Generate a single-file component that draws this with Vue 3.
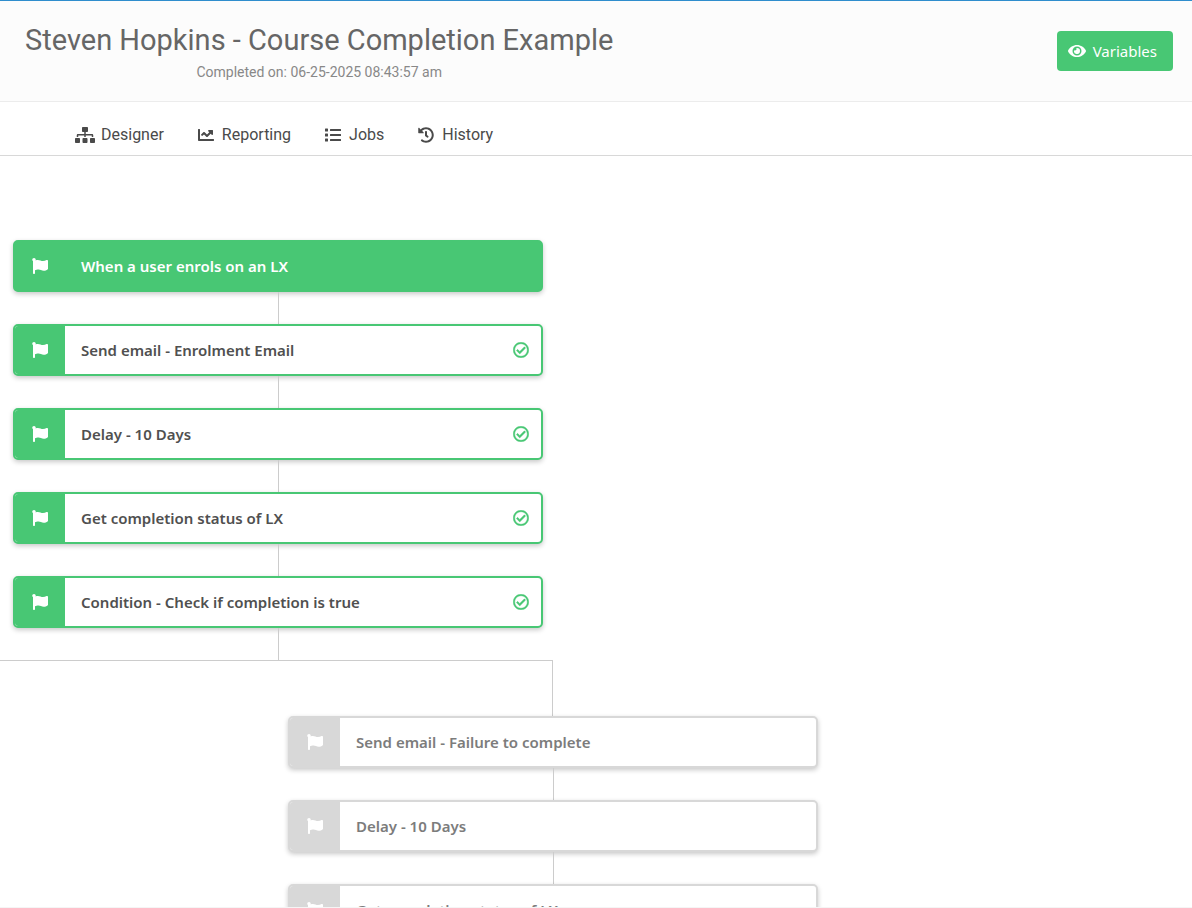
<script setup>
const icons = {
  flag: {
    box: '0 0 512 512',
    d: 'M349.565 98.783C295.978 98.783 251.721 64 184.348 64c-24.955 0-47.309 4.384-68.045 12.013a55.947 55.947 0 0 0 3.586-23.562C118.117 24.015 94.806 1.206 66.338.048 34.345-1.254 8 24.296 8 56c0 19.026 9.497 35.825 24 45.945V488c0 13.255 10.745 24 24 24h16c13.255 0 24-10.745 24-24v-94.4c28.311-12.064 63.582-22.122 114.435-22.122 53.588 0 97.844 34.783 165.217 34.783 48.169 0 86.667-16.294 122.505-40.858C506.84 359.452 512 349.571 512 339.045v-243.1c0-23.393-24.269-38.87-45.485-29.016-34.338 15.948-76.454 31.854-116.95 31.854z',
  },
  check: {
    box: '0 0 512 512',
    d: 'M256 8C119.033 8 8 119.033 8 256s111.033 248 248 248 248-111.033 248-248S392.967 8 256 8zm0 48c110.532 0 200 89.451 200 200 0 110.532-89.451 200-200 200-110.532 0-200-89.451-200-200 0-110.532 89.451-200 200-200m140.204 130.267l-22.536-22.718c-4.667-4.705-12.265-4.736-16.97-.068L215.346 303.697l-59.792-60.277c-4.667-4.705-12.265-4.736-16.97-.069l-22.719 22.536c-4.705 4.667-4.736 12.265-.068 16.971l90.781 91.516c4.667 4.705 12.265 4.736 16.97.068l172.589-171.204c4.704-4.668 4.734-12.266.067-16.971z',
  },
  eye: {
    box: '0 0 576 512',
    d: 'M572.52 241.4C518.29 135.59 410.93 64 288 64S57.68 135.64 3.48 241.41a32.35 32.35 0 0 0 0 29.19C57.71 376.41 165.07 448 288 448s230.32-71.64 284.52-177.41a32.35 32.35 0 0 0 0-29.19zM288 400a144 144 0 1 1 144-144 143.93 143.93 0 0 1-144 144zm0-240a95.31 95.31 0 0 0-25.31 3.79 47.85 47.85 0 0 1-66.9 66.9A95.78 95.78 0 1 0 288 160z',
  },
}

const tabs = [
  {
    label: 'Designer',
    box: '0 0 640 512',
    d: 'M128 352H32c-17.67 0-32 14.33-32 32v96c0 17.67 14.33 32 32 32h96c17.67 0 32-14.33 32-32v-96c0-17.67-14.33-32-32-32zm-24-80h192v48h48v-48h192v48h48v-57.59c0-21.17-17.23-38.41-38.41-38.41H344v-64h40c17.67 0 32-14.33 32-32V32c0-17.67-14.33-32-32-32H256c-17.67 0-32 14.33-32 32v96c0 17.67 14.33 32 32 32h40v64H94.41C73.23 224 56 241.23 56 262.41V320h48v-48zm264 80h-96c-17.67 0-32 14.33-32 32v96c0 17.67 14.33 32 32 32h96c17.67 0 32-14.33 32-32v-96c0-17.67-14.33-32-32-32zm240 0h-96c-17.67 0-32 14.33-32 32v96c0 17.67 14.33 32 32 32h96c17.67 0 32-14.33 32-32v-96c0-17.67-14.33-32-32-32z',
  },
  {
    label: 'Reporting',
    box: '0 0 512 512',
    d: 'M496 384H64V80c0-8.84-7.16-16-16-16H16C7.16 64 0 71.16 0 80v336c0 17.67 14.33 32 32 32h464c8.84 0 16-7.16 16-16v-32c0-8.84-7.16-16-16-16zM464 96H345.94c-21.38 0-32.09 25.85-16.97 40.97l32.4 32.4L288 242.75l-73.37-73.37c-12.5-12.5-32.76-12.5-45.25 0l-68.69 68.69c-6.25 6.25-6.25 16.38 0 22.63l22.62 22.62c6.25 6.25 16.38 6.25 22.63 0L192 237.25l73.37 73.37c12.5 12.5 32.76 12.5 45.25 0l96-96 32.4 32.4c15.12 15.12 40.97 4.41 40.97-16.97V112c.01-8.84-7.15-16-15.99-16z',
  },
  {
    label: 'Jobs',
    box: '0 0 512 512',
    d: 'M80 368H16a16 16 0 0 0-16 16v64a16 16 0 0 0 16 16h64a16 16 0 0 0 16-16v-64a16 16 0 0 0-16-16zm0-320H16A16 16 0 0 0 0 64v64a16 16 0 0 0 16 16h64a16 16 0 0 0 16-16V64a16 16 0 0 0-16-16zm0 160H16a16 16 0 0 0-16 16v64a16 16 0 0 0 16 16h64a16 16 0 0 0 16-16v-64a16 16 0 0 0-16-16zm416 176H176a16 16 0 0 0-16 16v32a16 16 0 0 0 16 16h320a16 16 0 0 0 16-16v-32a16 16 0 0 0-16-16zm0-320H176a16 16 0 0 0-16 16v32a16 16 0 0 0 16 16h320a16 16 0 0 0 16-16V80a16 16 0 0 0-16-16zm0 160H176a16 16 0 0 0-16 16v32a16 16 0 0 0 16 16h320a16 16 0 0 0 16-16v-32a16 16 0 0 0-16-16z',
  },
  {
    label: 'History',
    box: '0 0 512 512',
    d: 'M504 255.531c.253 136.64-111.18 248.372-247.82 248.468-59.015.042-113.223-20.53-155.822-54.911-11.077-8.94-11.905-25.541-1.839-35.607l11.267-11.267c8.609-8.609 22.353-9.551 31.891-1.984C173.062 425.135 212.781 440 256 440c101.705 0 184-82.311 184-184 0-101.705-82.311-184-184-184-48.814 0-93.149 18.969-126.068 49.932l50.754 50.754c10.08 10.08 2.941 27.314-11.313 27.314H24c-8.837 0-16-7.163-16-16V38.627c0-14.254 17.234-21.393 27.314-11.314l49.372 49.372C129.209 34.136 189.552 8 256 8c136.81 0 247.747 110.78 248 247.531zm-180.912 78.784l9.823-12.63c8.138-10.463 6.253-25.542-4.21-33.679L288 256.349V152c0-13.255-10.745-24-24-24h-16c-13.255 0-24 10.745-24 24v135.651l65.409 50.874c10.463 8.137 25.541 6.253 33.679-4.21z',
  },
]

const mainSteps = [
  { label: 'When a user enrols on an LX', kind: 'trigger' },
  { label: 'Send email - Enrolment Email', kind: 'done' },
  { label: 'Delay - 10 Days', kind: 'done' },
  { label: 'Get completion status of LX', kind: 'done' },
  { label: 'Condition - Check if completion is true', kind: 'done' },
]

const branchSteps = [
  { label: 'Send email - Failure to complete', kind: 'pending' },
  { label: 'Delay - 10 Days', kind: 'pending' },
  { label: 'Get completion status of LX', kind: 'pending' },
]
</script>

<template>
  <div class="page">
    <header class="header">
      <div class="heading">
        <h1>Steven Hopkins - Course Completion Example</h1>
        <p>Completed on: 06-25-2025 08:43:57 am</p>
      </div>
      <button type="button" class="variables">
        <svg class="eye" :viewBox="icons.eye.box" aria-hidden="true"><path :d="icons.eye.d" /></svg>
        Variables
      </button>
    </header>

    <nav class="tabs">
      <a v-for="tab in tabs" :key="tab.label" href="#" class="tab">
        <svg class="tab-icon" :viewBox="tab.box" aria-hidden="true"><path :d="tab.d" /></svg>
        {{ tab.label }}
      </a>
    </nav>

    <main class="canvas">
      <ol class="flow">
        <li v-for="step in mainSteps" :key="step.label" class="step">
          <div class="card" :class="step.kind">
            <span class="marker">
              <svg class="icon" :viewBox="icons.flag.box" aria-hidden="true"><path :d="icons.flag.d" /></svg>
            </span>
            <span class="label">{{ step.label }}</span>
            <svg v-if="step.kind === 'done'" class="icon check" :viewBox="icons.check.box" aria-hidden="true">
              <path :d="icons.check.d" />
            </svg>
          </div>
        </li>
      </ol>
      <div class="fork"></div>
      <ol class="flow branch">
        <li v-for="step in branchSteps" :key="step.label" class="step">
          <div class="card" :class="step.kind">
            <span class="marker">
              <svg class="icon" :viewBox="icons.flag.box" aria-hidden="true"><path :d="icons.flag.d" /></svg>
            </span>
            <span class="label">{{ step.label }}</span>
          </div>
        </li>
      </ol>
    </main>
  </div>
</template>

<style>
body {
  margin: 0;
  background: #fff;
}
</style>

<style scoped>
.page {
  box-sizing: border-box;
  display: flex;
  flex-direction: column;
  height: 100vh;
  border-top: 1px solid #2f8dcd;
  border-bottom: 1px solid #f5f5f5;
  font-family: Roboto, "Liberation Sans", sans-serif;
  color: #4a4a4a;
}

svg {
  display: block;
  flex: none;
  fill: currentColor;
}

.header {
  display: flex;
  align-items: center;
  justify-content: space-between;
  flex: none;
  padding: 19px 19px 19px 25px;
  background: #fcfcfc;
  border-bottom: 1px solid #ececec;
}

.heading {
  text-align: center;
}

h1 {
  margin: 0;
  font-size: 29px;
  line-height: 40px;
  font-weight: 400;
  color: #666;
}

p {
  margin: 2px 0 0;
  font-size: 14px;
  line-height: 20px;
  color: #888;
}

.variables {
  display: flex;
  align-items: center;
  gap: 7px;
  height: 40px;
  padding: 0 16px 0 11px;
  border: 0;
  border-radius: 4px;
  background: #48c774;
  color: #fff;
  font-family: "Noto Sans", "Open Sans", sans-serif;
  font-size: 15px;
  line-height: 20px;
  cursor: pointer;
}

.eye {
  width: 18px;
  height: 16px;
}

.tabs {
  display: flex;
  flex: none;
  gap: 32px;
  padding: 21px 75px 8px;
  border-bottom: 1px solid #d8d8d8;
}

.tab {
  display: flex;
  align-items: center;
  gap: 6px;
  font-size: 16px;
  line-height: 24px;
  color: #4a4a4a;
  text-decoration: none;
}

.tab-icon {
  width: 20px;
  height: 16px;
}

.canvas {
  flex: 1;
  min-height: 0;
  padding-top: 84px;
  overflow: hidden;
}

.flow {
  width: 530px;
  margin: 0 0 0 13px;
  padding: 0;
  list-style: none;
}

.branch {
  margin-left: 288px;
}

.step::after {
  content: "";
  display: block;
  width: 1px;
  height: 32px;
  margin: 0 auto;
  background: #ccc;
}

.card {
  box-sizing: border-box;
  display: flex;
  align-items: center;
  height: 52px;
  overflow: hidden;
  border: 2px solid #48c774;
  border-radius: 5px;
  background: #fff;
  box-shadow: 0 2px 5px rgba(0, 0, 0, 0.22);
  font-family: "Noto Sans", "Open Sans", sans-serif;
  font-size: 15px;
  line-height: 24px;
  font-weight: 600;
  color: #505050;
}

.marker {
  display: flex;
  align-items: center;
  justify-content: center;
  flex: none;
  width: 50px;
  height: 100%;
  background: #48c774;
  color: #fff;
}

.label {
  flex: 1;
  padding-left: 16px;
}

.icon {
  width: 16px;
  height: 16px;
}

.check {
  margin-right: 12px;
  color: #48c774;
  stroke: currentColor;
  stroke-width: 14;
}

.trigger {
  background: #48c774;
  color: #fff;
}

.pending {
  border-color: #d8d8d8;
  color: #7c7c7c;
}

.pending .marker {
  background: #d8d8d8;
}

.fork {
  box-sizing: border-box;
  width: 553px;
  height: 56px;
  border-top: 1px solid #ccc;
  border-right: 1px solid #ccc;
}
</style>
